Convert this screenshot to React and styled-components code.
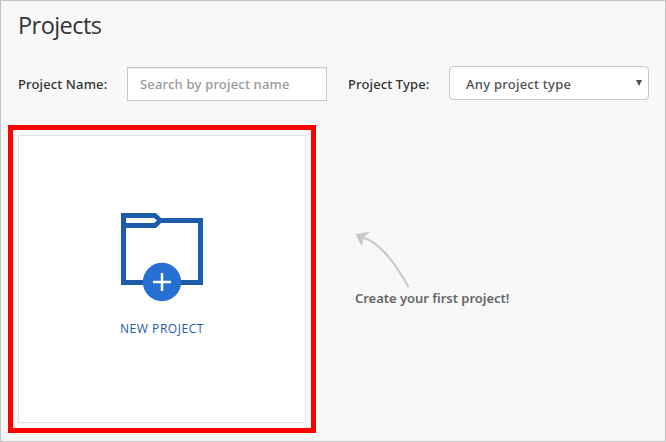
import React from "react";
import styled, { createGlobalStyle } from "styled-components";

const GlobalStyle = createGlobalStyle`
  *, *::before, *::after { box-sizing: border-box; }
  body { margin: 0; }
`;

const Page = styled.main`
  width: 666px;
  height: 442px;
  padding: 8px 7px 0;
  overflow: hidden;
  border: 1px solid #c3c3c3;
  background: #f8f8f8;
  color: #333;
  font-family: "Noto Sans", "Open Sans", sans-serif;
  font-size: 13px;
`;

const Title = styled.h1`
  height: 32px;
  margin: 0 0 0 10px;
  font-family: "Open Sans", "Noto Sans", sans-serif;
  font-size: 23.5px;
  font-weight: 400;
  line-height: 32px;
  letter-spacing: -0.55px;
`;

const Filters = styled.form`
  display: flex;
  align-items: flex-start;
  height: 59px;
  margin-top: 25px;
  padding-left: 10px;
`;

const Label = styled.label`
  width: ${(p) => p.$width}px;
  padding-top: 9px;
  font-weight: 500;
  line-height: 18px;
  letter-spacing: 0.13px;
  white-space: nowrap;
`;

const SearchInput = styled.input`
  width: 200px;
  height: 34px;
  margin: 1px 21px 0 0;
  padding: 0 12px;
  border: 1px solid #c8c8c8;
  border-radius: 0;
  outline: none;
  background: #fff;
  box-shadow: inset 0 1px 1px rgba(0, 0, 0, 0.07);
  color: #555;
  font: 500 13px "Noto Sans", sans-serif;
  letter-spacing: 0.19px;

  &::placeholder { color: #999; opacity: 1; }
`;

const TypeSelect = styled.button`
  display: flex;
  align-items: center;
  justify-content: space-between;
  width: 200px;
  height: 34px;
  padding: 2px 6px 0 16px;
  border: 1px solid #c8c8c8;
  border-radius: 4px;
  background: #fff;
  color: #505050;
  font: 500 13px "Noto Sans", sans-serif;
  letter-spacing: 0.25px;
`;

const Caret = styled.svg`
  width: 6px;
  height: 6px;
  margin-bottom: 3px;
`;

const Content = styled.section`
  display: flex;
`;

const Highlight = styled.div`
  width: 308px;
  height: 308px;
  padding: 5px;
  border: 5px solid #f00;
`;

const NewProject = styled.button`
  display: flex;
  flex-direction: column;
  align-items: center;
  width: 288px;
  height: 288px;
  padding: 77px 0 0;
  border: 1px solid #e0e0e0;
  background: #fff;
  color: #1c5aaa;
`;

const FolderIcon = styled.svg`
  width: 82px;
  height: 89px;
`;

const TileLabel = styled.span`
  margin-top: 18px;
  font: 400 12px/18px "Open Sans", "Noto Sans", sans-serif;
  letter-spacing: 0.55px;
  white-space: nowrap;
`;

const Hint = styled.aside`
  margin: 106px 0 0 39px;
`;

const HintArrow = styled.svg`
  display: block;
  width: 60px;
  height: 58px;
`;

const HintText = styled.p`
  margin: 0;
  color: #666;
  font-weight: 600;
  line-height: 18px;
  letter-spacing: -0.03px;
  white-space: nowrap;
`;

export default function App() {
  return (
    <>
      <GlobalStyle />
      <Page>
        <Title>Projects</Title>
        <Filters>
          <Label htmlFor="project-name" $width={109}>Project Name:</Label>
          <SearchInput id="project-name" placeholder="Search by project name" />
          <Label htmlFor="project-type" $width={101}>Project Type:</Label>
          <TypeSelect id="project-type" type="button">
            Any project type
            <Caret viewBox="0 0 6 6" aria-hidden="true">
              <path d="M0 0H6L3 6Z" fill="#505050" />
            </Caret>
          </TypeSelect>
        </Filters>
        <Content>
          <Highlight>
            <NewProject type="button">
              <FolderIcon viewBox="0 0 82 89" aria-hidden="true">
                <path
                  fill="#1c5cab"
                  fillRule="evenodd"
                  d="M0 0H35L40 5H82V72H0ZM5 5V10H33L36 7.5L33 5ZM40 10L35 15H5V67H77V10Z"
                />
                <circle cx="41" cy="69" r="19.2" fill="#2670d3" />
                <path d="M41 60V78M32 69H50" stroke="#fff" strokeWidth="2.5" />
              </FolderIcon>
              <TileLabel>NEW PROJECT</TileLabel>
            </NewProject>
          </Highlight>
          <Hint>
            <HintArrow viewBox="0 0 60 58" aria-hidden="true">
              <path d="M7 6C25 12 39 30 53.5 56" fill="none" stroke="#c8c8c8" strokeWidth="2" />
              <path d="M0.5 3L15.5 0.5L9 6L6.5 15Z" fill="#c8c8c8" />
            </HintArrow>
            <HintText>Create your first project!</HintText>
          </Hint>
        </Content>
      </Page>
    </>
  );
}
